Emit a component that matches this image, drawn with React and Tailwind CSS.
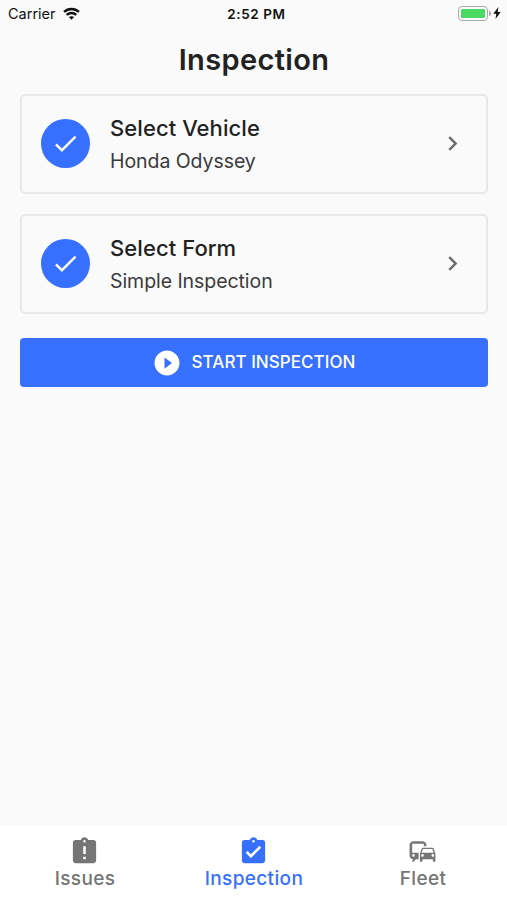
import React, { useState } from 'react';
import {
    MdAssignmentLate,
    MdAssignmentTurnedIn,
    MdCheck,
    MdChevronRight,
    MdCommute,
    MdPlayCircleFilled,
} from 'react-icons/md';

const steps = [
    { title: 'Select Vehicle', value: 'Honda Odyssey' },
    { title: 'Select Form', value: 'Simple Inspection' },
];

const tabs = [
    { name: 'Issues', icon: MdAssignmentLate },
    { name: 'Inspection', icon: MdAssignmentTurnedIn },
    { name: 'Fleet', icon: MdCommute },
];

const StatusBar = () => (
    <div className='grid grid-cols-3 items-center h-7 pl-2 pr-[6px] text-[#111111]'>
        <div className='flex items-center gap-[7px]'>
            <span className='text-[14.5px] leading-7'>Carrier</span>
            <svg className='w-[17px] h-[13px] -mt-0.5' viewBox='0 0 17 13' fill='none' stroke='currentColor' strokeWidth='2.5'>
                <path d='M1 4.9C5.2.9 11.8.9 16 4.9' />
                <path d='M3.7 7.9C6.4 5.4 10.6 5.4 13.3 7.9' />
                <path d='M8.5 12.8 5.9 10.1C7.4 8.8 9.6 8.8 11.1 10.1Z' fill='currentColor' stroke='none' />
            </svg>
        </div>
        <span className='pl-1 text-center text-[13.5px] leading-7 font-semibold tracking-[0.6px]'>2:52 PM</span>
        <div className='flex items-center justify-end -mt-0.5'>
            <div className='w-[30px] h-[15px] p-[2px] border border-[#a9a9a9] rounded-[4px]'>
                <div className='h-full bg-[#4cd964] rounded-[1px]'></div>
            </div>
            <div className='w-[2px] h-[5px] ml-px bg-[#a9a9a9] rounded-r-full'></div>
            <svg className='w-[8px] h-[12px] ml-[2px]' viewBox='0 0 8 12' fill='currentColor'>
                <path d='M5.4 0 .3 6.7h3L2.5 12 7.7 5h-3z' />
            </svg>
        </div>
    </div>
);

const StepCard = ({ title, value }) => (
    <button className='flex items-center w-full h-[100px] pl-[19px] pr-[19px] pb-px border-2 border-[#e8e8e8] rounded-[5px] text-left'>
        <span className='flex items-center justify-center w-[49px] h-[49px] rounded-full bg-[#3770ff]'>
            <MdCheck className='text-white text-[29px]' />
        </span>
        <span className='flex flex-col flex-1 ml-5 pt-[2px]'>
            <span className='text-[22px] leading-[34px] font-medium tracking-[0.07px] text-[#222222]'>{title}</span>
            <span className='text-[19.5px] leading-[33px] tracking-[-0.06px] text-[#3a3a3a]'>{value}</span>
        </span>
        <MdChevronRight className='text-[#6b6b6b] text-[29px]' />
    </button>
);

const App = () => {
    const [activeTab, setActiveTab] = useState('Inspection');

    return (
        <div className="flex flex-col h-screen bg-[#fafafa] font-['Inter','Liberation_Sans',sans-serif]">
            <StatusBar />
            <h1 className='h-[66px] pl-px text-center text-[29px] leading-[63px] font-semibold tracking-[0.35px] text-[#222222]'>
                Inspection
            </h1>
            <main className='flex flex-col flex-1 pl-5 pr-[19px]'>
                <div className='flex flex-col gap-5'>
                    {steps.map((step) => (
                        <StepCard key={step.title} title={step.title} value={step.value} />
                    ))}
                </div>
                <button className='flex items-center justify-center gap-[10px] h-[49px] mt-6 pr-px bg-[#3770ff] rounded-[4px] text-white'>
                    <MdPlayCircleFilled className='text-[30px]' />
                    <span className='text-[17px] font-medium tracking-[0.05px]'>START INSPECTION</span>
                </button>
            </main>
            {/* Bottom tabs */}
            <nav className='grid grid-cols-3 h-[75px] bg-white'>
                {tabs.map(({ name, icon: Icon }) => (
                    <button
                        key={name}
                        onClick={() => setActiveTab(name)}
                        className={`flex flex-col items-center pt-[11px] ${activeTab === name ? 'text-[#3770ff]' : 'text-[#757575]'}`}
                    >
                        <Icon className='text-[31px]' />
                        <span className='pl-px text-[19px] leading-6 font-medium tracking-[0.35px]'>{name}</span>
                    </button>
                ))}
            </nav>
        </div>
    );
}

export default App;
